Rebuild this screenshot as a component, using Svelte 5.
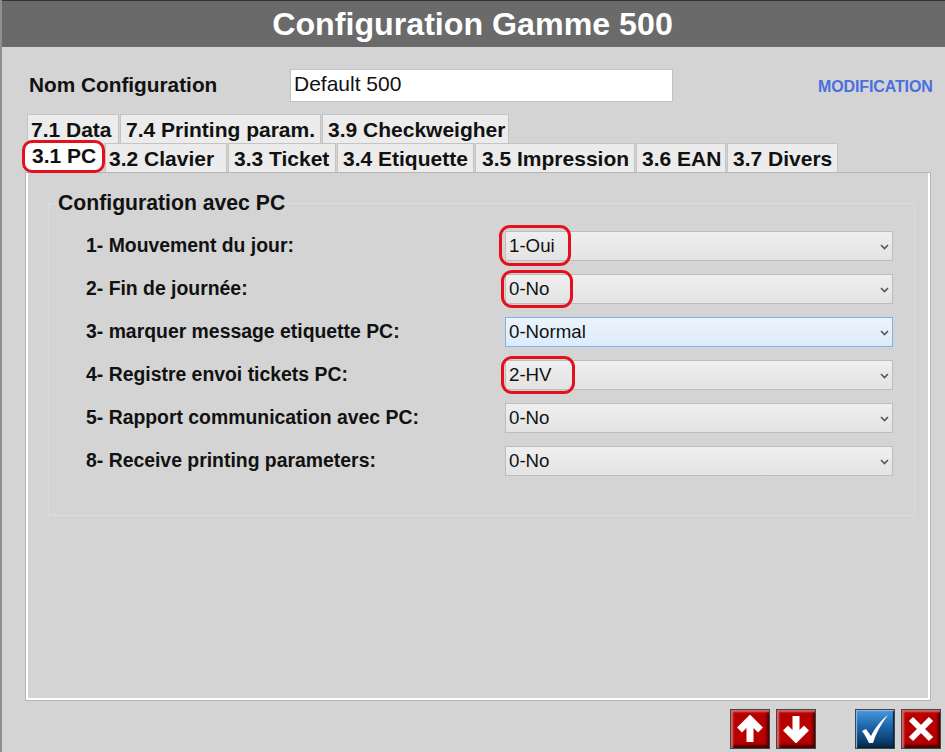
<script>
  const topTabs = [
    { text: '7.1 Data', width: 92, pad: 3 },
    { text: '7.4 Printing param.', width: 201, pad: 5 },
    { text: '3.9 Checkweigher', width: 187, pad: 5 }
  ]
  const mainTabs = [
    { text: '3.1 PC', active: true },
    { text: '3.2 Clavier', width: 122, pad: 3 },
    { text: '3.3 Ticket', width: 108, pad: 5 },
    { text: '3.4 Etiquette', width: 137, pad: 5 },
    { text: '3.5 Impression', width: 160, pad: 6 },
    { text: '3.6 EAN', width: 90, pad: 5 },
    { text: '3.7 Divers', width: 111, pad: 5 }
  ]
  const rows = [
    { label: '1- Mouvement du jour:', value: '1-Oui', mark: 'top: -6px; left: -6px; width: 72px; height: 41px' },
    { label: '2- Fin de journée:', value: '0-No', mark: 'top: -4px; left: -4px; width: 72px; height: 38px' },
    { label: '3- marquer message etiquette PC:', value: '0-Normal', focus: true },
    { label: '4- Registre envoi tickets PC:', value: '2-HV', mark: 'top: -4px; left: -4px; width: 74px; height: 38px' },
    { label: '5- Rapport communication avec PC:', value: '0-No' },
    { label: '8- Receive printing parameters:', value: '0-No' }
  ]
</script>

<div class="window">
  <header>Configuration Gamme 500</header>

  <div class="name-row">
    <label for="cfg-name">Nom Configuration</label>
    <input id="cfg-name" type="text" value="Default 500">
    <span class="mode">MODIFICATION</span>
  </div>

  <div class="tabs">
    <div class="tab-row">
      {#each topTabs as tab}
        <div class="tab" style="width: {tab.width}px; padding-left: {tab.pad}px">{tab.text}</div>
      {/each}
    </div>
    <div class="tab-row">
      {#each mainTabs as tab}
        {#if tab.active}
          <div class="tab active">{tab.text}</div>
        {:else}
          <div class="tab" style="width: {tab.width}px; padding-left: {tab.pad}px">{tab.text}</div>
        {/if}
      {/each}
    </div>
  </div>

  <div class="panel">
    <fieldset>
      <legend>Configuration avec PC</legend>
      {#each rows as row}
        <div class="row">
          <label for={row.label}>{row.label}</label>
          <div class="field">
            <select id={row.label} class:focus={row.focus}>
              <option>{row.value}</option>
            </select>
            <svg class="chevron" width="9" height="6" viewBox="0 0 9 6">
              <path d="M1 1 L4.5 4.5 L8 1" fill="none" stroke="#555" stroke-width="1.6"/>
            </svg>
            {#if row.mark}
              <span class="mark" style={row.mark}></span>
            {/if}
          </div>
        </div>
      {/each}
    </fieldset>
  </div>

  <div class="actions">
    <button class="red" aria-label="Monter">
      <svg width="28" height="28" viewBox="0 0 28 28"><path d="M14 27 V5 M3.5 15 L14 4.5 L24.5 15" fill="none" stroke="#fff" stroke-width="7"/></svg>
    </button>
    <button class="red" aria-label="Descendre">
      <svg width="28" height="28" viewBox="0 0 28 28"><path d="M14 1 V23 M3.5 13 L14 23.5 L24.5 13" fill="none" stroke="#fff" stroke-width="7"/></svg>
    </button>
    <button class="blue" aria-label="Valider">
      <svg width="28" height="30" viewBox="0 0 28 30"><path d="M1 17 L5 15 L10 22 C14 14 20 6 27 1 C20 10 15 19 12 29 L8 29 C6 25 4 21 1 17 Z" fill="#fff"/></svg>
    </button>
    <button class="red" aria-label="Annuler">
      <svg width="26" height="26" viewBox="0 0 26 26"><path d="M3 3 L23 23 M23 3 L3 23" stroke="#fff" stroke-width="6" fill="none"/></svg>
    </button>
  </div>
</div>

<style>
  :global(body) {
    margin: 0;
    background: #d4d4d4;
    overflow: hidden;
  }

  .window {
    box-sizing: border-box;
    width: 945px;
    height: 752px;
    padding-top: 1px;
    padding-left: 2px;
    background: #d4d4d4;
    font-family: "Liberation Sans", Arial, sans-serif;
    color: #111;
    box-shadow: inset 2px 0 0 #8f8f8f, inset 0 1px 0 #333;
  }

  header {
    height: 46px;
    line-height: 47px;
    padding-right: 2px;
    background: #6a6a6a;
    color: #fff;
    font-size: 32.2px;
    font-weight: bold;
    text-align: center;
  }

  .name-row {
    display: flex;
    align-items: center;
    height: 34px;
    margin-top: 21px;
    padding-left: 27px;
  }

  .name-row label {
    width: 261px;
    font-size: 20.8px;
    font-weight: bold;
  }

  .name-row input {
    box-sizing: border-box;
    width: 383px;
    height: 33px;
    padding: 0 3px 3px 3px;
    border: 1px solid #c2c2c2;
    background: #fff;
    font: 21px "Liberation Sans", Arial, sans-serif;
    color: #111;
    outline: none;
  }

  .mode {
    margin-left: 145px;
    margin-top: 3px;
    color: #4a6fe0;
    font-size: 16px;
    font-weight: bold;
    white-space: nowrap;
    letter-spacing: -0.12px;
  }

  .tabs {
    margin-top: 12px;
    padding-left: 25px;
  }

  .tab-row {
    display: flex;
    height: 29px;
  }

  .tab {
    box-sizing: border-box;
    height: 29px;
    line-height: 30px;
    background: #ececec;
    border: 1px solid #c4c4c4;
    border-bottom: 0;
    margin-right: 1px;
    font-size: 21px;
    font-weight: bold;
    white-space: nowrap;
  }

  .tab.active {
    position: relative;
    width: 83px;
    height: 33px;
    margin-top: -3px;
    margin-left: -5px;
    margin-right: 0;
    padding-left: 7px;
    background: #fff;
    border: 3px solid #e5101c;
    border-radius: 10px;
    line-height: 25px;
    z-index: 2;
  }

  .panel {
    box-sizing: border-box;
    width: 906px;
    height: 529px;
    margin-left: 23px;
    padding: 18px 16px 0 22px;
    border: 1px solid #b5b5b5;
    box-shadow: inset 2px 0 0 #fff, inset 0 -2px 0 #fff, inset -2px 0 0 #fff;
  }

  fieldset {
    box-sizing: border-box;
    width: 866px;
    height: 325px;
    margin: 0;
    padding: 9px 21px 0 37px;
    border: 1px solid #dcdcdc;
  }

  legend {
    padding: 0 2px;
    margin-left: -30px;
    font-size: 21.2px;
    font-weight: bold;
    line-height: 24px;
  }

  .row {
    display: flex;
    align-items: center;
    height: 43px;
  }

  .row label {
    width: 419px;
    font-size: 19.4px;
    font-weight: bold;
    white-space: nowrap;
  }

  .field {
    position: relative;
    width: 388px;
    height: 30px;
  }

  select {
    box-sizing: border-box;
    width: 100%;
    height: 30px;
    padding: 0 0 0 3px;
    appearance: none;
    border: 1px solid #bdbdbd;
    border-radius: 0;
    background: linear-gradient(#efefef, #e3e3e3);
    font: 18.7px "Liberation Sans", Arial, sans-serif;
    color: #111;
    outline: none;
  }

  select.focus {
    border-color: #7eb4ea;
    background: linear-gradient(#ecf4fc, #dcebfb);
  }

  .chevron {
    position: absolute;
    top: 13px;
    right: 4px;
    pointer-events: none;
  }

  .mark {
    position: absolute;
    box-sizing: border-box;
    border: 3px solid #e5101c;
    border-radius: 11px;
    pointer-events: none;
  }

  .actions {
    display: flex;
    justify-content: flex-end;
    gap: 6px;
    margin-top: 8px;
    padding-right: 4px;
  }

  button {
    box-sizing: border-box;
    display: flex;
    align-items: center;
    justify-content: center;
    width: 40px;
    height: 40px;
    padding: 0;
    border: 1px solid #444;
  }

  .red {
    background: #b80000;
    box-shadow: inset 2px 2px 2px #d86a6a, inset -2px -3px 3px #4a0000;
  }

  .blue {
    margin-left: 33px;
    background: linear-gradient(#4a98dc, #1c64a8 45%, #0b3a68 85%, #062440);
    box-shadow: inset 1px 1px 1px #8abcea, inset -1px -1px 1px #04213c;
  }
</style>
